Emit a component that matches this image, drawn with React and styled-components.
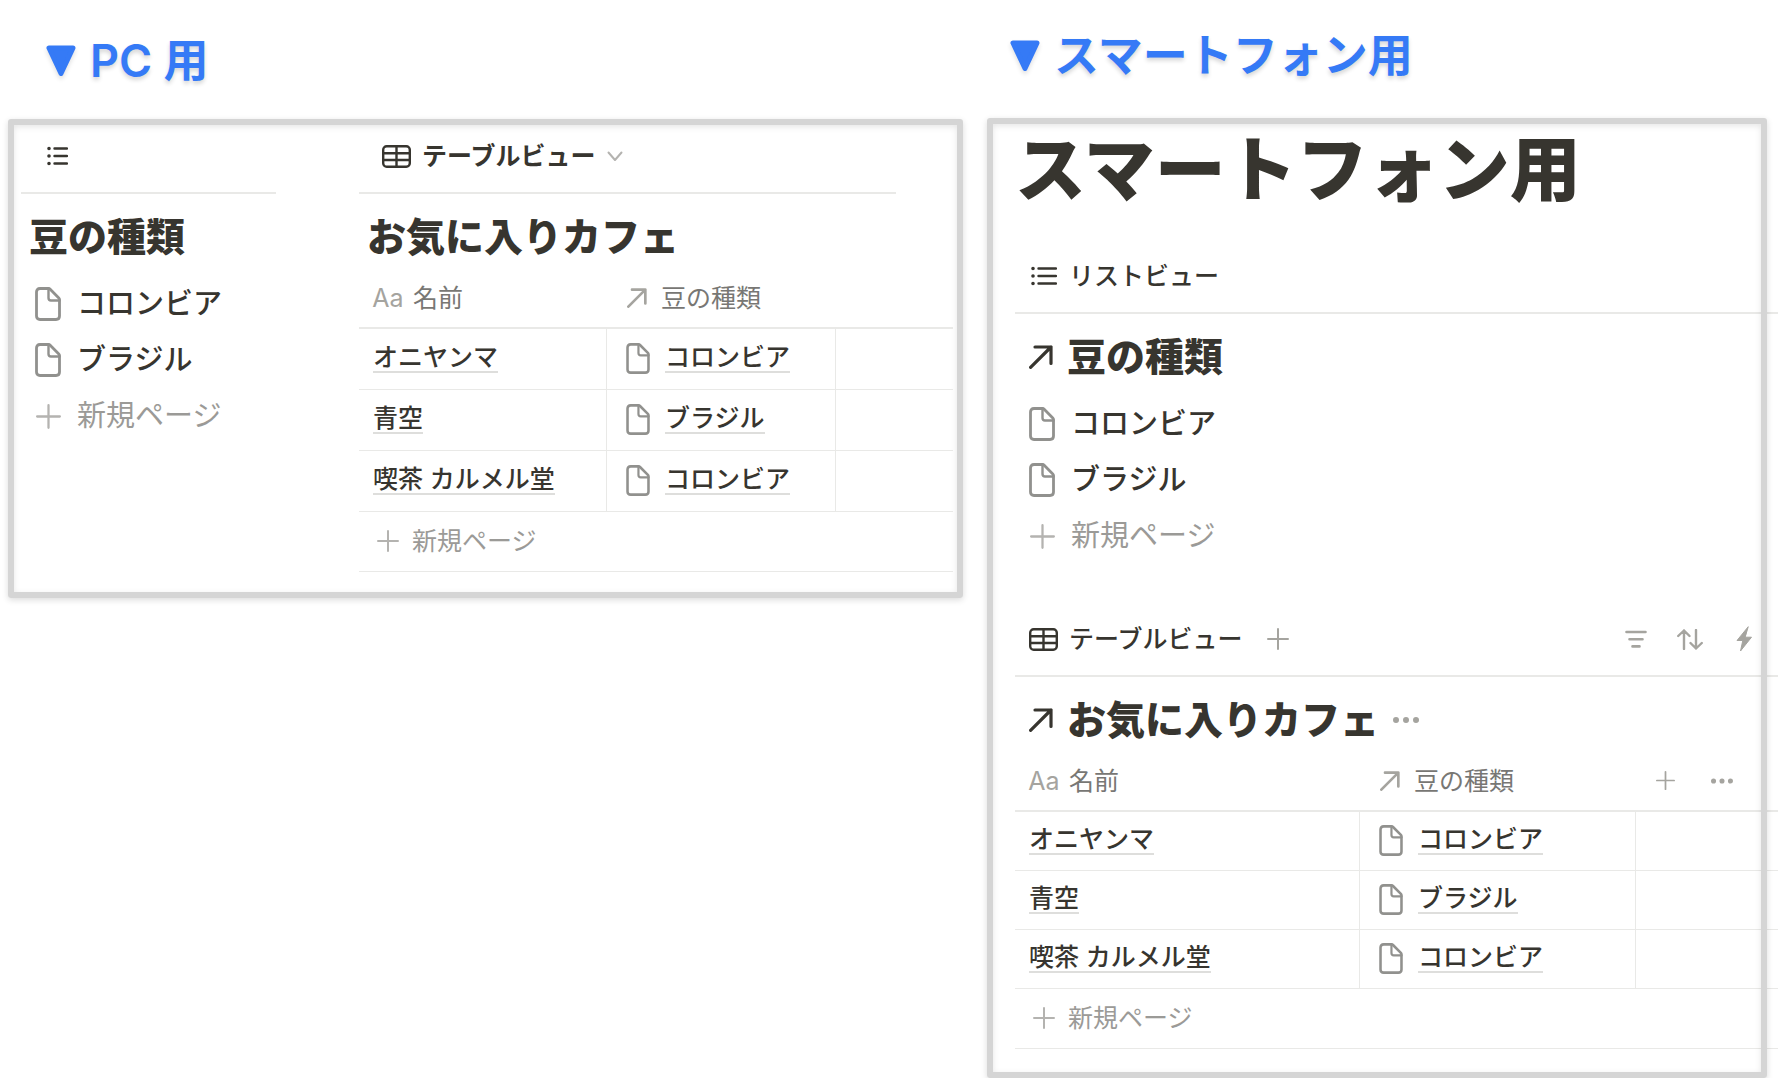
import styled, { createGlobalStyle, css } from 'styled-components';

const GlobalStyle = createGlobalStyle`
  * {
    box-sizing: border-box;
  }

  body {
    margin: 0;
    background: #fff;
    color: #37352f;
    font-family: Inter, 'Noto Sans CJK JP', sans-serif;
    font-size: 25px;
    line-height: 28px;
    overflow-x: hidden;
  }

  svg {
    display: block;
    fill: none;
    stroke: currentColor;
    stroke-linecap: round;
    stroke-linejoin: round;
  }
`;

const Page = styled.main`
  display: grid;
  grid-template-columns: minmax(0, 955fr) minmax(0, 791fr);
  gap: 24px;
  align-items: start;
  padding-left: 8px;
`;

const Column = styled.section`
  padding-top: ${({ $top }) => $top}px;
`;

const Caption = styled.h2`
  display: flex;
  align-items: center;
  gap: 14px;
  margin: 0;
  padding-left: ${({ $indent }) => $indent}px;
  padding-bottom: ${({ $gap }) => $gap}px;
  color: #357af6;
  font-size: 45px;
  font-weight: 600;
  line-height: 50px;
  text-shadow: 0 3px 4px rgba(0, 0, 0, 0.16);

  svg {
    fill: currentColor;
    filter: drop-shadow(0 3px 2px rgba(0, 0, 0, 0.12));
  }
`;

const frame = css`
  border: 6px solid #d5d5d5;
  border-radius: 3px;
  box-shadow: 0 2px 6px rgba(0, 0, 0, 0.14), inset 0 2px 6px rgba(0, 0, 0, 0.1);
`;

const PcBoard = styled.div`
  ${frame}
  display: grid;
  grid-template-columns: 255px minmax(0, 1fr);
  gap: 83px;
  padding: 9px 4px 20px 7px;
`;

// The phone page runs past the right side of its frame, so the frame lies on top.
const PhoneBoard = styled.div`
  position: relative;
  padding: 6px 0 29px 28px;

  &::after {
    ${frame}
    content: '';
    position: absolute;
    inset: 0 11px 0 0;
    pointer-events: none;
  }
`;

const PageTitle = styled.h1`
  margin: 0 0 40px;
  font-size: 71px;
  font-weight: 900;
  line-height: 90px;
`;

const Database = styled.article`
  margin-top: ${({ $gap }) => $gap || 0}px;
`;

const TabBar = styled.div`
  display: flex;
  align-items: center;
  justify-content: space-between;
  height: 60px;
  margin-right: ${({ $end }) => $end || 0}px;
  padding: 0 21px 14px ${({ $indent }) => $indent}px;
  border-bottom: 2px solid #e9e9e7;
`;

const Group = styled.div`
  display: flex;
  align-items: center;
  gap: ${({ $gap }) => $gap}px;
`;

const Button = styled.button`
  display: flex;
  align-items: center;
  gap: ${({ $gap }) => $gap || 0}px;
  padding: 0;
  border: 0;
  background: none;
  color: ${({ $muted }) => ($muted ? '#a5a49f' : 'inherit')};
  font: inherit;
  font-weight: ${({ $muted, $strong }) => ($muted ? 400 : $strong ? 600 : 500)};
  cursor: pointer;
`;

const Slot = styled.span`
  display: flex;
  flex: none;
  justify-content: center;
  width: ${({ $width }) => $width}px;
  color: ${({ $color }) => $color || 'inherit'};
`;

const Heading = styled.h3`
  display: flex;
  align-items: center;
  gap: 14px;
  height: 82px;
  margin: 0;
  padding: 4px 0 0 ${({ $indent }) => $indent}px;
  font-size: 39px;
  font-weight: 900;
  line-height: 48px;
`;

const List = styled.ul`
  margin: 0;
  padding: 0;
  list-style: none;
`;

const ListItem = styled.li`
  display: flex;
  align-items: center;
  height: 56px;
  padding-left: 14px;
  font-size: 29px;
`;

const ItemLink = styled.a`
  display: flex;
  align-items: center;
  gap: 16px;
  color: inherit;
  font-weight: 500;
  text-decoration: none;
`;

const Muted = styled.span`
  color: #9b9a97;
`;

const Table = styled.table`
  width: 100%;
  border-collapse: separate;
  border-spacing: 0;
  table-layout: fixed;
`;

const HeadCell = styled.th`
  width: ${({ $width }) => ($width ? `${$width}px` : 'auto')};
  height: 53px;
  padding: 0 0 8px ${({ $indent }) => $indent || 14}px;
  border-bottom: 2px solid #e9e9e7;
  color: #787774;
  font-weight: 400;
  text-align: left;
`;

const Cell = styled.td`
  height: ${({ $height }) => $height}px;
  padding: 0 0 2px ${({ $indent }) => $indent || 14}px;
  border-bottom: 1px solid #e9e9e7;
  vertical-align: middle;

  &:not(:last-child) {
    border-right: 1px solid #e9e9e7;
  }
`;

const TextLink = styled.a`
  display: inline-block;
  border-bottom: 2px solid #dededc;
  color: inherit;
  font-weight: 500;
  text-decoration: none;
`;

const Triangle = () => (
  <svg width="30" height="32" viewBox="0 0 30 32" aria-hidden="true">
    <path d="M3 3h24L15 28.500z" strokeWidth="5" />
  </svg>
);

const ListIcon = ({ width = 26 }) => (
  <svg width={width} height="20" viewBox={`0 0 ${width} 20`} aria-hidden="true">
    <path d={`M7.500 2.500H${width - 1}M7.500 10H${width - 1}M7.500 17.500H${width - 1}`} strokeWidth="2.400" />
    <path d="M2 2.500h.01M2 10h.01M2 17.500h.01" strokeWidth="3.600" />
  </svg>
);

const TableIcon = () => (
  <svg width="29" height="23" viewBox="0 0 29 23" strokeWidth="2.400" aria-hidden="true">
    <rect x="1.200" y="1.200" width="26.600" height="20.600" rx="3.500" />
    <path d="M1.200 8.200h26.600M1.200 15h26.600M14.500 1.200v20.600" />
  </svg>
);

const PageIcon = ({ width = 26, height = 34 }) => (
  <svg width={width} height={height} viewBox="0 0 26 34" strokeWidth="2.800" aria-hidden="true">
    <path d="M5 1.500h8.500q1 0 1.700.7l8.600 8.700q.7.700.7 1.700V29q0 3.500-3.500 3.500H5Q1.500 32.500 1.500 29V5Q1.500 1.500 5 1.500z" />
    <path d="M13.500 1.500V11q0 2.500 2.500 2.500h8.500" strokeWidth="2.400" />
  </svg>
);

const PlusIcon = ({ size = 22 }) => (
  <svg width={size} height={size} viewBox="0 0 22 22" strokeWidth="2" aria-hidden="true">
    <path d="M11 1v20M1 11h20" />
  </svg>
);

const ArrowIcon = ({ size = 20 }) => (
  <svg width={size} height={size} viewBox="0 0 24 24" strokeWidth="3.200" aria-hidden="true">
    <path d="M1.600 22.400L22 2M6 2h16v16.500" />
  </svg>
);

const ChevronIcon = () => (
  <svg width="16" height="11" viewBox="0 0 16 11" strokeWidth="2" aria-hidden="true">
    <path d="M1.500 1.500L8 9l6.500-7.500" />
  </svg>
);

const DotsIcon = ({ width = 26 }) => (
  <svg width={width} height="6" viewBox="0 0 26 6" aria-hidden="true">
    <path d="M3 3h.01M13 3h.01M23 3h.01" strokeWidth="6" />
  </svg>
);

const FilterIcon = () => (
  <svg width="22" height="18" viewBox="0 0 22 18" strokeWidth="2.600" aria-hidden="true">
    <path d="M1.500 2h19M4.500 9.200h13M7.500 16.400h7" />
  </svg>
);

const SortIcon = () => (
  <svg width="26" height="21" viewBox="0 0 26 21" strokeWidth="2.400" aria-hidden="true">
    <path d="M7 20V1.500M1.200 7L7 1.500 12.500 7M19 1v18.500M13.500 14l5.500 5.500L24.800 14" />
  </svg>
);

const BoltIcon = () => (
  <svg width="16" height="26" viewBox="0 0 16 26" aria-hidden="true">
    <path d="M12 1L1 14.500h5.800L4.500 25 15.500 11.200H9.500z" fill="currentColor" strokeWidth="1" />
  </svg>
);

const beans = ['コロンビア', 'ブラジル'];

const cafes = [
  { name: 'オニヤンマ', bean: 'コロンビア' },
  { name: '青空', bean: 'ブラジル' },
  { name: '喫茶 カルメル堂', bean: 'コロンビア' },
];

const BeanList = () => (
  <List>
    {beans.map((bean) => (
      <ListItem key={bean}>
        <ItemLink href="#">
          <Slot $width={26} $color="#91918e">
            <PageIcon />
          </Slot>
          {bean}
        </ItemLink>
      </ListItem>
    ))}
    <ListItem>
      <Button type="button" $muted $gap={16}>
        <Slot $width={26} $color="#b4b3b0">
          <PlusIcon size={25} />
        </Slot>
        <Muted>新規ページ</Muted>
      </Button>
    </ListItem>
  </List>
);

const CafeTable = ({ widths, rowHeight, actions }) => (
  <Table>
    <thead>
      <tr>
        <HeadCell scope="col" $width={widths[0]}>
          <Group $gap={10}>
            <Slot $width={30} $color="#a5a49f">Aa</Slot>
            名前
          </Group>
        </HeadCell>
        <HeadCell scope="col" $width={widths[1]} $indent={19}>
          <Group $gap={13}>
            <Slot $width={22} $color="#a5a49f">
              <ArrowIcon />
            </Slot>
            豆の種類
          </Group>
        </HeadCell>
        <HeadCell $indent={20}>
          {actions && (
            <Group $gap={36}>
              <Button type="button" $muted aria-label="プロパティを追加">
                <PlusIcon size={19} />
              </Button>
              <Button type="button" $muted aria-label="その他">
                <DotsIcon width={22} />
              </Button>
            </Group>
          )}
        </HeadCell>
      </tr>
    </thead>
    <tbody>
      {cafes.map(({ name, bean }) => (
        <tr key={name}>
          <Cell $height={rowHeight}>
            <TextLink href="#">{name}</TextLink>
          </Cell>
          <Cell $height={rowHeight} $indent={19}>
            <Group $gap={15}>
              <Slot $width={24} $color="#91918e">
                <PageIcon width={24} height={31} />
              </Slot>
              <TextLink href="#">{bean}</TextLink>
            </Group>
          </Cell>
          <Cell $height={rowHeight} />
        </tr>
      ))}
    </tbody>
    <tfoot>
      <tr>
        <Cell colSpan={3} $height={60}>
          <Button type="button" $muted $gap={10}>
            <Slot $width={29} $color="#b4b3b0">
              <PlusIcon />
            </Slot>
            <Muted>新規ページ</Muted>
          </Button>
        </Cell>
      </tr>
    </tfoot>
  </Table>
);

const App = () => (
  <Page>
    <GlobalStyle />
    <Column $top={36}>
      <Caption $indent={38} $gap={33}>
        <Triangle />
        PC 用
      </Caption>
      <PcBoard>
        <Database>
          <TabBar $indent={22}>
            <Button type="button" aria-label="リストビュー">
              <Slot $width={29}>
                <ListIcon width={21} />
              </Slot>
            </Button>
          </TabBar>
          <Heading $indent={8}>豆の種類</Heading>
          <BeanList />
        </Database>
        <Database>
          <TabBar $indent={23} $end={57}>
            <Button type="button" $strong $gap={11}>
              <Slot $width={29}>
                <TableIcon />
              </Slot>
              テーブルビュー
              <Slot $width={16} $color="#b4b3b0">
                <ChevronIcon />
              </Slot>
            </Button>
          </TabBar>
          <Heading $indent={8}>お気に入りカフェ</Heading>
          <CafeTable widths={[248, 229]} rowHeight={61} />
        </Database>
      </PcBoard>
    </Column>

    <Column $top={31}>
      <Caption $indent={23} $gap={37}>
        <Triangle />
        スマートフォン用
      </Caption>
      <PhoneBoard>
        <PageTitle>スマートフォン用</PageTitle>
        <Database>
          <TabBar $indent={14}>
            <Button type="button" $gap={11}>
              <Slot $width={29}>
                <ListIcon />
              </Slot>
              リストビュー
            </Button>
          </TabBar>
          <Heading $indent={14}>
            <ArrowIcon size={24} />
            豆の種類
          </Heading>
          <BeanList />
        </Database>
        <Database $gap={53}>
          <TabBar $indent={14}>
            <Group $gap={24}>
              <Button type="button" $gap={11}>
                <Slot $width={29}>
                  <TableIcon />
                </Slot>
                テーブルビュー
              </Button>
              <Button type="button" $muted aria-label="ビューを追加">
                <PlusIcon />
              </Button>
            </Group>
            <Group $gap={28}>
              <Button type="button" $muted aria-label="フィルター">
                <Slot $width={26}>
                  <FilterIcon />
                </Slot>
              </Button>
              <Button type="button" $muted aria-label="並べ替え">
                <Slot $width={26}>
                  <SortIcon />
                </Slot>
              </Button>
              <Button type="button" $muted aria-label="オートメーション">
                <Slot $width={26}>
                  <BoltIcon />
                </Slot>
              </Button>
            </Group>
          </TabBar>
          <Heading $indent={14}>
            <ArrowIcon size={24} />
            お気に入りカフェ
            <Button type="button" $muted aria-label="その他">
              <DotsIcon />
            </Button>
          </Heading>
          <CafeTable widths={[345, 276]} rowHeight={59} actions />
        </Database>
      </PhoneBoard>
    </Column>
  </Page>
);

export default App;
